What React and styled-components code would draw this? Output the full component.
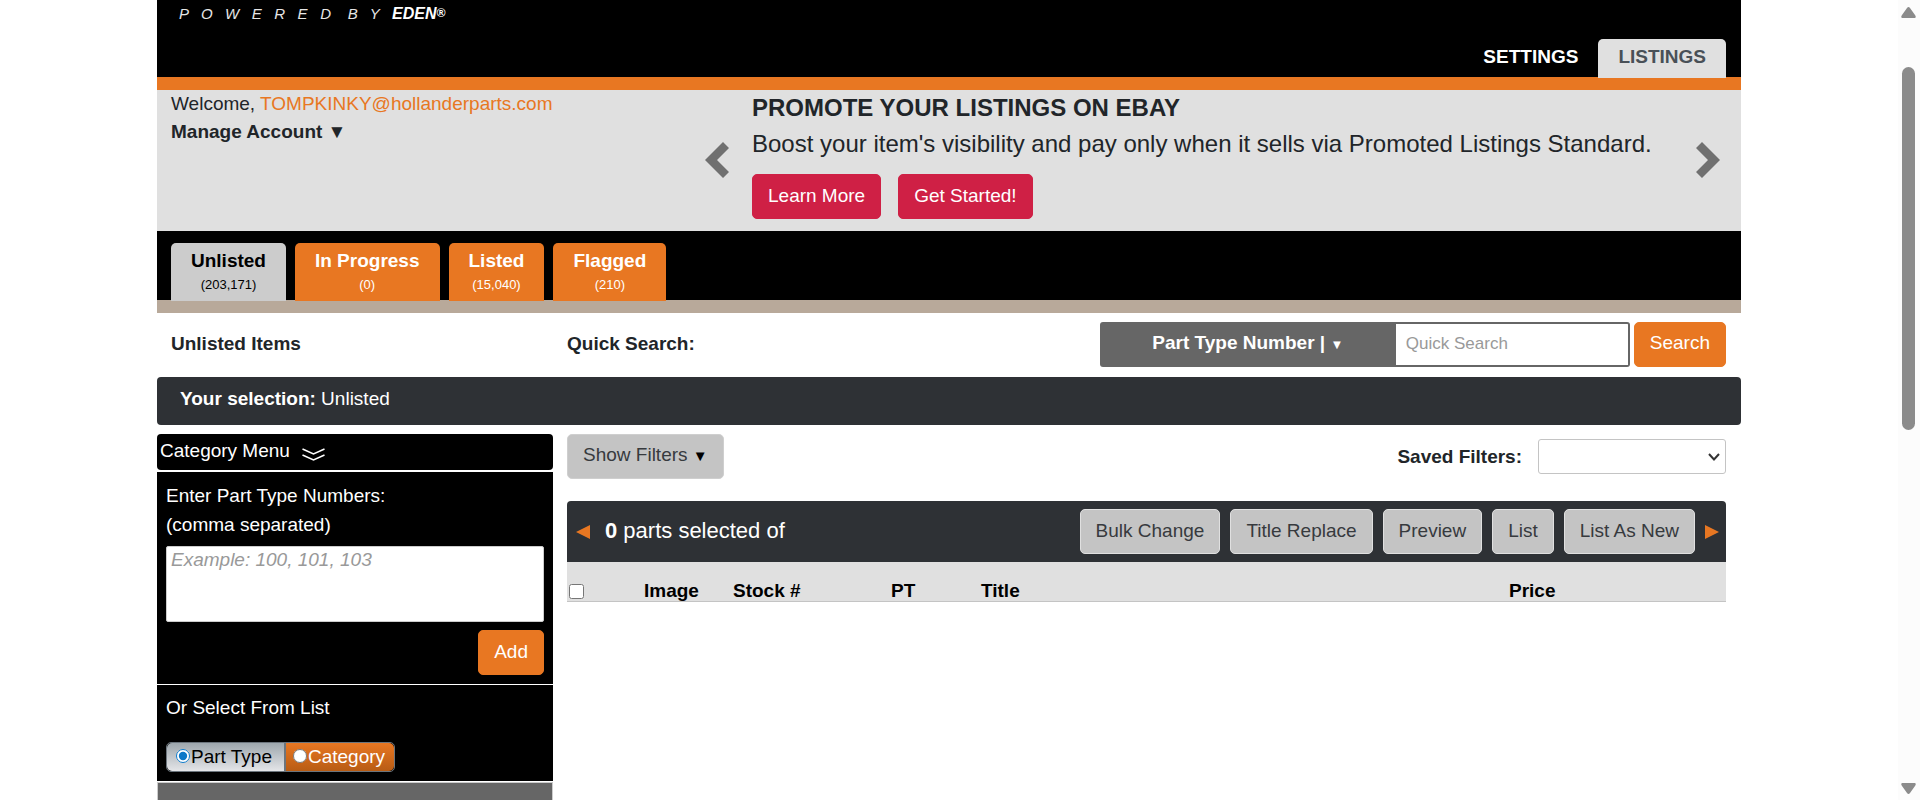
import React, { useState } from 'react'
import styled, { createGlobalStyle } from 'styled-components'

const GlobalStyle=createGlobalStyle`
*{
box-sizing:border-box;
}
body{
margin:0;
background-color:white;
color:#212529;
font-family:"Liberation Sans",Arial,sans-serif;
font-size:19px;
line-height:28px;
}
button,input,select,textarea{
font-family:inherit;
font-size:inherit;
line-height:inherit;
}
a{
text-decoration:none;
}
`

const Shell=styled.div`
display:flex;
height:100vh;
overflow:hidden;
`

const Page=styled.div`
flex:1;
min-width:0;
`

const Container=styled.div`
max-width:1584px;
margin:0 auto;
`

const ScrollTrack=styled.div`
width:22px;
padding:7px 4px 6px 2px;
display:flex;
flex-direction:column;
align-items:center;
background-color:#fcfcfc;
`

const Thumb=styled.div`
width:13px;
height:363px;
margin:49px 0 auto;
border-radius:7px;
background-color:#8b8b8b;
`

const Header=styled.header`
height:90px;
padding:0 15px 12px 22px;
display:flex;
justify-content:space-between;
align-items:flex-end;
background:linear-gradient(black 77px,#e87722 77px);
`

const Tagline=styled.div`
align-self:flex-start;
white-space:pre;
font-size:15px;
font-style:italic;
color:#e6e6e6;

b{
font-size:16px;
color:white;
}
sup{
font-size:12px;
line-height:1;
vertical-align:2px;
}
`

const TopNav=styled.nav`
display:flex;
`

const TopLink=styled.a`
height:39px;
padding:4px 20px;
border-radius:5px 5px 0 0;
font-weight:bold;
color:${(p)=>(p.$active?'#495057':'white')};
background-color:${(p)=>(p.$active?'#e0e0e0':'transparent')};
`

const Banner=styled.section`
height:141px;
padding:0 15px 0 14px;
display:flex;
background-color:#e0e0e0;
`

const Account=styled.div`
width:534px;

a{
color:#e87722;
}
`

const PlainButton=styled.button`
padding:0;
border:none;
background:none;
color:inherit;
font-weight:bold;
display:block;
cursor:pointer;
`

const Promo=styled.div`
flex:1;
display:flex;
justify-content:space-between;
align-items:center;
padding:0 6px 2px 0;
`

const PromoBody=styled.div`
flex:1;
align-self:flex-start;
padding-left:23px;
`

const PromoTitle=styled.h2`
margin:0;
padding-top:2px;
font-size:24px;
line-height:32px;
`

const PromoText=styled.p`
margin:0;
font-size:24px;
line-height:40px;
`

const PromoActions=styled.div`
display:flex;
gap:17px;
padding-top:10px;
`

const Arrow=styled.button`
padding:0;
border:none;
background:none;
display:flex;
cursor:pointer;
`

const Button=styled.button`
height:45px;
padding:0 15px 2px;
border:1px solid ${(p)=>p.$border || p.$bg};
border-radius:5px;
background-color:${(p)=>p.$bg};
color:${(p)=>p.$color || 'white'};
white-space:nowrap;
cursor:pointer;
`

const Tabs=styled.nav`
height:82px;
padding:12px 14px 0;
display:flex;
align-items:flex-start;
gap:9px;
background:linear-gradient(black 69px,#b8a99a 69px);
`

const Tab=styled.a`
height:58px;
padding:4px 20px;
border-radius:5px 5px 0 0;
text-align:center;
font-weight:bold;
color:${(p)=>(p.$active?'black':'white')};
background-color:${(p)=>(p.$active?'#cccccc':'#e87722')};

small{
display:block;
font-size:13px;
font-weight:normal;
line-height:20px;
}
`

const SearchRow=styled.div`
height:64px;
padding:0 15px 2px 14px;
display:flex;
align-items:center;
font-weight:bold;
`

const RowTitle=styled.div`
width:396px;
`

const SearchForm=styled.form`
margin-left:auto;
display:flex;
align-items:center;
`

const TypeButton=styled.button`
width:296px;
height:45px;
border:none;
border-radius:3px 0 0 3px;
background-color:#666666;
color:white;
font-weight:bold;
cursor:pointer;

span{
font-size:13px;
}
`

const SearchInput=styled.input`
width:234px;
height:45px;
margin-right:4px;
padding:0 10px;
border:2px solid #666666;
border-left-width:0;
border-radius:0 3px 3px 0;
font-size:17px;

&::placeholder{
color:#999999;
}
`

const Selection=styled.div`
height:48px;
padding:8px 23px;
border-radius:4px;
background-color:#2e3135;
color:white;
`

const Main=styled.main`
display:flex;
padding-top:9px;
`

const Sidebar=styled.aside`
width:25%;
color:white;
`

const MenuToggle=styled.button`
width:100%;
height:36px;
padding:0 3px 2px;
border:none;
border-radius:4px;
display:flex;
align-items:center;
gap:12px;
background-color:black;
color:white;
cursor:pointer;

svg{
margin-top:7px;
}
`

const Panel=styled.div`
margin-top:${(p)=>p.$gap};
padding:9px;
background-color:black;
`

const PartLabel=styled.label`
display:block;
line-height:29px;
`

const PartInput=styled.textarea`
display:block;
width:100%;
height:76px;
margin:7px 0 8px;
padding:0 4px;
border:1px solid #cccccc;
border-radius:2px;
line-height:25px;
resize:none;

&::placeholder{
color:#999999;
font-style:italic;
}
`

const Right=styled.div`
display:flex;
justify-content:flex-end;
`

const Toggle=styled.fieldset`
display:inline-flex;
margin:20px 0 0;
padding:0;
border:1px solid #6c757d;
border-radius:5px;
overflow:hidden;
vertical-align:top;
`

const ToggleOption=styled.label`
display:flex;
align-items:center;
height:28px;
padding:0 ${(p)=>(p.$first?'12px':'9px')} 0 ${(p)=>(p.$first?'9px':'7px')};
color:${(p)=>(p.$on?'black':'white')};
background:${(p)=>(p.$on?'linear-gradient(#9ea7ad,#e4e5e8)':'linear-gradient(#e87722,#b85c14)')};

& + &{
border-left:2px solid #6c757d;
}
input{
width:14px;
height:14px;
margin:0 1px 3px 0;
accent-color:#0b78c8;
}
`

const CategoryList=styled.div`
height:60px;
margin-top:1px;
border:1px solid #cccccc;
background-color:#666666;
`

const Content=styled.section`
flex:1;
padding:0 15px 0 14px;
`

const FilterRow=styled.div`
display:flex;
justify-content:space-between;
align-items:center;
`

const SavedFilters=styled.div`
display:flex;
align-items:center;
gap:16px;
font-weight:bold;
`

const SelectBox=styled.div`
display:grid;
align-items:center;

select,svg{
grid-area:1 / 1;
}
select{
width:188px;
height:35px;
border:1px solid #c4c4c4;
border-radius:3px;
background-color:white;
appearance:none;
}
svg{
justify-self:end;
margin-right:6px;
pointer-events:none;
}
`

const Glyph=styled.span`
color:black;
font-size:15px;
`

const Toolbar=styled.div`
height:61px;
margin-top:22px;
padding:0 7px 0 9px;
display:flex;
align-items:center;
gap:10px;
border-radius:4px 4px 0 0;
background-color:#2e3135;
`

const Count=styled.div`
margin:0 auto 0 5px;
padding-bottom:2px;
font-size:22px;
color:white;
`

const TableWrap=styled.div`
height:40px;
overflow:hidden;
border-bottom:1px solid #c4c4c4;
background-color:#e0e0e0;
`

const Table=styled.table`
width:100%;
table-layout:fixed;
border-collapse:collapse;
color:black;

th{
padding:15px 0 0;
text-align:left;
}
input{
display:block;
width:15px;
height:15px;
margin:4px 2px;
}
`

const Chevron=({left})=>(
  <svg width="24" height="36" viewBox="0 0 24 36" fill="#707070">
    <path d={left?'M0 18L18 0L24 6L12 18L24 30L18 36Z':'M24 18L6 0L0 6L12 18L0 30L6 36Z'} />
  </svg>
)

const Triangle=({left})=>(
  <svg width="14" height="14" viewBox="0 0 14 14" fill="#e87722">
    <path d={left?'M14 0V14L0 7Z':'M0 0V14L14 7Z'} />
  </svg>
)

const ScrollArrow=({down})=>(
  <svg width="15" height="11" viewBox="0 0 15 11" fill="#8b8b8b">
    <path d={down?'M1 0H14Q15.500 1 14 3L9 10Q7.500 12 6 10L1 3Q-0.500 1 1 0Z':'M1 11H14Q15.500 10 14 8L9 1Q7.500 -1 6 1L1 8Q-0.500 10 1 11Z'} />
  </svg>
)

const tabs=[
  {name:'Unlisted',count:'203,171'},
  {name:'In Progress',count:'0'},
  {name:'Listed',count:'15,040'},
  {name:'Flagged',count:'210'},
]

const actions=['Bulk Change','Title Replace','Preview','List','List As New']

const App = () => {
  const [mode,setMode]=useState('Part Type')

  return (
    <Shell>
      <GlobalStyle />
      <Page>
        <Container>
          <Header>
            <Tagline>
              {'P   O   W   E   R   E   D    B   Y   '}<b>EDEN<sup>®</sup></b>
            </Tagline>
            <TopNav>
              <TopLink href="#settings">SETTINGS</TopLink>
              <TopLink href="#listings" $active>LISTINGS</TopLink>
            </TopNav>
          </Header>
          <Banner>
            <Account>
              Welcome, <a href="#account">TOMPKINKY@hollanderparts.com</a>
              <PlainButton>Manage Account ▼</PlainButton>
            </Account>
            <Promo>
              <Arrow aria-label="Previous"><Chevron left /></Arrow>
              <PromoBody>
                <PromoTitle>PROMOTE YOUR LISTINGS ON EBAY</PromoTitle>
                <PromoText>Boost your item's visibility and pay only when it sells via Promoted Listings Standard.</PromoText>
                <PromoActions>
                  <Button $bg="#cf2045">Learn More</Button>
                  <Button $bg="#cf2045">Get Started!</Button>
                </PromoActions>
              </PromoBody>
              <Arrow aria-label="Next"><Chevron /></Arrow>
            </Promo>
          </Banner>
          <Tabs>
            {tabs.map((t,i)=>(
              <Tab key={t.name} href="#tab" $active={i===0}>
                {t.name}
                <small>({t.count})</small>
              </Tab>
            ))}
          </Tabs>
          <SearchRow>
            <RowTitle>Unlisted Items</RowTitle>
            <label htmlFor="quick">Quick Search:</label>
            <SearchForm onSubmit={(e)=>e.preventDefault()}>
              <TypeButton type="button">Part Type Number | <span>▼</span></TypeButton>
              <SearchInput id="quick" placeholder="Quick Search" />
              <Button $bg="#e87722">Search</Button>
            </SearchForm>
          </SearchRow>
          <Selection><b>Your selection:</b> Unlisted</Selection>
          <Main>
            <Sidebar>
              <MenuToggle>
                Category Menu
                <svg width="23" height="13" viewBox="0 0 23 13" fill="none" stroke="white" strokeWidth="1.500">
                  <path d="M0.500 1L11.500 6L22.500 1M0.500 7L11.500 12L22.500 7" />
                </svg>
              </MenuToggle>
              <Panel $gap="2px">
                <PartLabel htmlFor="parts">Enter Part Type Numbers:<br />(comma separated)</PartLabel>
                <PartInput id="parts" placeholder="Example: 100, 101, 103" />
                <Right><Button $bg="#e87722">Add</Button></Right>
              </Panel>
              <Panel $gap="1px">
                <div>Or Select From List</div>
                <Toggle>
                  {['Part Type','Category'].map((m,i)=>(
                    <ToggleOption key={m} $first={i===0} $on={mode===m}>
                      <input type="radio" name="mode" checked={mode===m} onChange={()=>setMode(m)} />
                      {m}
                    </ToggleOption>
                  ))}
                </Toggle>
              </Panel>
              <CategoryList />
            </Sidebar>
            <Content>
              <FilterRow>
                <Button $bg="#c4c4c4" $border="#cfcfcf" $color="#373a3e">Show Filters <Glyph>▼</Glyph></Button>
                <SavedFilters>
                  <label htmlFor="saved">Saved Filters:</label>
                  <SelectBox>
                    <select id="saved"><option></option></select>
                    <svg width="12" height="8" viewBox="0 0 12 8" fill="none" stroke="#333333" strokeWidth="2">
                      <path d="M1 1L6 6.500L11 1" />
                    </svg>
                  </SelectBox>
                </SavedFilters>
              </FilterRow>
              <Toolbar>
                <Arrow aria-label="Previous page"><Triangle left /></Arrow>
                <Count><b>0</b> parts selected of</Count>
                {actions.map((a)=>(
                  <Button key={a} $bg="#c4c4c4" $border="#e0e0e0" $color="#373a3e">{a}</Button>
                ))}
                <Arrow aria-label="Next page"><Triangle /></Arrow>
              </Toolbar>
              <TableWrap>
                <Table>
                  <colgroup>
                    <col width="77" />
                    <col width="89" />
                    <col width="158" />
                    <col width="90" />
                    <col />
                    <col width="217" />
                  </colgroup>
                  <thead>
                    <tr>
                      <th><input type="checkbox" aria-label="Select all" /></th>
                      <th>Image</th>
                      <th>Stock #</th>
                      <th>PT</th>
                      <th>Title</th>
                      <th>Price</th>
                    </tr>
                  </thead>
                </Table>
              </TableWrap>
            </Content>
          </Main>
        </Container>
      </Page>
      <ScrollTrack>
        <ScrollArrow />
        <Thumb />
        <ScrollArrow down />
      </ScrollTrack>
    </Shell>
  )
}

export default App
